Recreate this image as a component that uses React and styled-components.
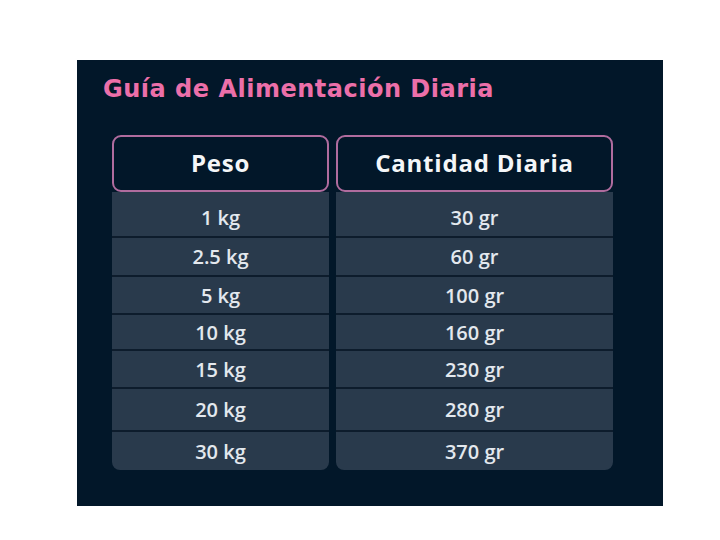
import React from "react";
import styled, { createGlobalStyle } from "styled-components";

const GlobalStyle = createGlobalStyle`
  body {
    margin: 0;
    background: #ffffff;
    font-family: "Open Sans", "Noto Sans", sans-serif;
  }
`;

const Page = styled.div`
  width: 720px;
  height: 540px;
  padding: 60px 0 0 77px;
  box-sizing: border-box;
`;

const Panel = styled.section`
  width: 586px;
  height: 446px;
  background: #021729;
  box-sizing: border-box;
  padding: 14px 0 0 26px;
`;

const Title = styled.h2`
  margin: 0;
  color: #ec6fa9;
  font-family: "DejaVu Sans", "Liberation Sans", sans-serif;
  font-weight: 700;
  font-size: 24px;
  line-height: 30px;
  letter-spacing: 0.5px;
`;

const Table = styled.div`
  display: grid;
  grid-template-columns: 217px 277px;
  grid-template-rows: 57px 44px 39px 38px 36px 38px 43px 40px;
  column-gap: 7px;
  margin: 31px 0 0 9px;
`;

const HeadCell = styled.div`
  display: flex;
  align-items: center;
  justify-content: center;
  border: 2px solid #b06c9e;
  border-radius: 9px;
  background: #021729;
  color: #f4f6f8;
  font-weight: 700;
  font-size: 24px;
  letter-spacing: 0.8px;
  padding-bottom: 3px;
`;

const Cell = styled.div`
  display: flex;
  align-items: center;
  justify-content: center;
  background: #293a4c;
  color: #e3e8ee;
  font-weight: 600;
  font-size: 20px;
  border-top: ${(p) => (p.$first ? "none" : "2px solid #0d1c2c")};
  padding-top: ${(p) => (p.$first ? "6px" : "0")};
  border-radius: ${(p) => (p.$last ? "0 0 8px 8px" : "0")};
`;

const rows = [
  ["1 kg", "30 gr"],
  ["2.5 kg", "60 gr"],
  ["5 kg", "100 gr"],
  ["10 kg", "160 gr"],
  ["15 kg", "230 gr"],
  ["20 kg", "280 gr"],
  ["30 kg", "370 gr"],
];

const App = () => (
  <>
    <GlobalStyle />
    <Page>
      <Panel>
        <Title>Guía de Alimentación Diaria</Title>
        <Table>
          <HeadCell>Peso</HeadCell>
          <HeadCell>Cantidad Diaria</HeadCell>
          {rows.map(([peso, cantidad], i) => (
            <React.Fragment key={peso}>
              <Cell $first={i === 0} $last={i === rows.length - 1}>
                {peso}
              </Cell>
              <Cell $first={i === 0} $last={i === rows.length - 1}>
                {cantidad}
              </Cell>
            </React.Fragment>
          ))}
        </Table>
      </Panel>
    </Page>
  </>
);

export default App;
